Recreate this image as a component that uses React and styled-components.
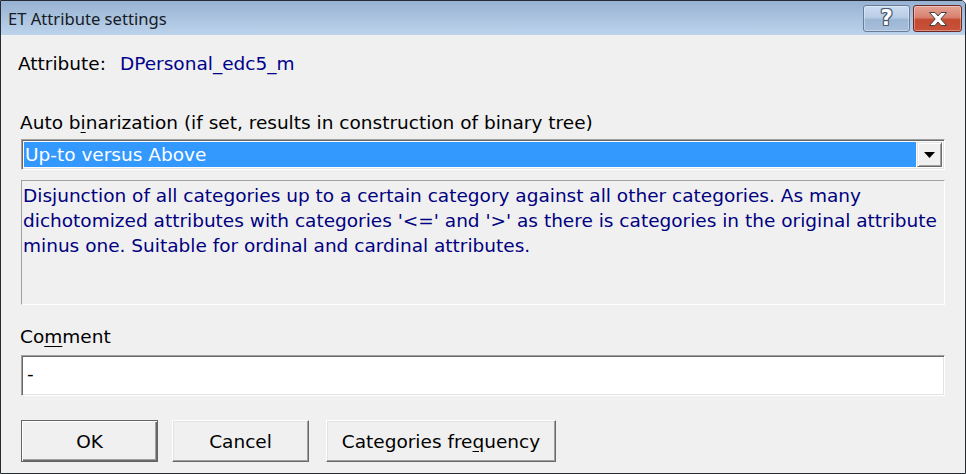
import React from "react";
import styled, { createGlobalStyle } from "styled-components";

const GlobalStyle = createGlobalStyle`
    html, body {
        margin: 0;
        padding: 0;
        background: #ffffff;
    }
    body {
        font-family: "DejaVu Sans", "Liberation Sans", sans-serif;
        font-size: 18.5px;
        color: #000;
    }
`

const Window = styled.div`
    width: 966px;
    height: 474px;
    box-sizing: border-box;
    display: flex;
    flex-direction: column;
    border: 1px solid #252a33;
    border-top-right-radius: 5px;
    box-shadow: inset 1px 0 0 #7ea5d6, inset -1px -1px 0 #23b4ea;
    overflow: hidden;
`

const TitleBar = styled.div`
    height: 34px;
    flex: none;
    display: flex;
    align-items: flex-start;
    justify-content: space-between;
    padding: 0 3px 0 7px;
    background: linear-gradient(#97b2d2, #bdd3ec);
    .caption{
        font-family: "Noto Sans", "Open Sans", sans-serif;
        font-size: 16.6px;
        color: #161b24;
        line-height: 36px;
    }
`

const CaptionButtons = styled.div`
    display: flex;
    gap: 3px;
    margin-top: 4px;
`

const CaptionButton = styled.div`
    width: ${props => props.$wide}px;
    height: 27px;
    box-sizing: border-box;
    border-radius: 3px;
    border: 1px solid ${props => props.$close ? '#6e2a22' : '#6a7d98'};
    background: ${props => props.$close
        ? 'linear-gradient(#e4a295 0%, #d9826f 45%, #c44a31 55%, #c8523a 100%)'
        : 'linear-gradient(#cadcf1 0%, #b9cde6 45%, #9cb6d4 55%, #a8c0dc 100%)'};
    box-shadow: inset 0 0 0 1px rgba(255,255,255,0.35);
    display: flex;
    align-items: center;
    justify-content: center;
    .q{
        font-family: "DejaVu Sans", sans-serif;
        font-weight: bold;
        font-size: 21px;
        line-height: 21px;
        color: #fff;
        text-shadow: 1px 0 0 #4b5a70, -1px 0 0 #4b5a70, 0 1px 0 #4b5a70, 0 -1px 0 #4b5a70,
            1px 1px 0 #4b5a70, -1px -1px 0 #4b5a70, 1px -1px 0 #4b5a70, -1px 1px 0 #4b5a70;
    }
`

const Client = styled.div`
    flex: 1;
    background: #f0f0f0;
    padding: 0 20px 0 19px;
    display: flex;
    flex-direction: column;
`

const AttrRow = styled.div`
    display: flex;
    margin-top: 17px;
    margin-left: -2px;
    line-height: 24px;
    .label{
        width: 102px;
    }
    .value{
        color: #00008b;
    }
`

const Label = styled.div`
    line-height: 24px;
    margin-top: ${props => props.$top}px;
    margin-bottom: ${props => props.$bottom}px;
    u{
        text-decoration-thickness: 1px;
        text-underline-offset: 3px;
    }
`

const Combo = styled.div`
    margin-left: 1px;
    height: 31px;
    box-sizing: border-box;
    display: flex;
    border-style: solid;
    border-width: 1px;
    border-color: #a0a0a0 #ffffff #ffffff #a0a0a0;
    box-shadow: inset 1px 1px 0 #696969, inset -1px -1px 0 #e3e3e3;
    background: #fff;
    padding: 2px;
    .selected{
        flex: 1;
        background: #3399ff;
        color: #fff;
        line-height: 26px;
        padding-left: 1px;
        margin-right: 1px;
    }
`

const DropButton = styled.div`
    width: 25px;
    box-sizing: border-box;
    background: #f0f0f0;
    border-style: solid;
    border-width: 1px;
    border-color: #e3e3e3 #696969 #696969 #e3e3e3;
    box-shadow: inset 1px 1px 0 #fff, inset -1px -1px 0 #a0a0a0;
    display: flex;
    align-items: center;
    justify-content: center;
`

const Description = styled.div`
    margin-top: 10px;
    margin-left: 1px;
    height: 125px;
    box-sizing: border-box;
    border-style: solid;
    border-width: 1px;
    border-color: #a0a0a0 #ffffff #ffffff #a0a0a0;
    color: #000080;
    line-height: 25px;
    padding: 2px 0 0 1px;
    white-space: nowrap;
`

const TextInput = styled.div`
    margin-left: 1px;
    height: 41px;
    box-sizing: border-box;
    background: #fff;
    border-style: solid;
    border-width: 1px;
    border-color: #a0a0a0 #ffffff #ffffff #a0a0a0;
    box-shadow: inset 1px 1px 0 #696969, inset -1px -1px 0 #e3e3e3;
    line-height: 35px;
    padding-left: 5px;
`

const ButtonRow = styled.div`
    display: flex;
    margin-top: 24px;
    margin-left: 1px;
    gap: 14px;
`

const Button = styled.div`
    width: ${props => props.$width}px;
    height: 42px;
    padding-top: 1px;
    box-sizing: border-box;
    background: #f0f0f0;
    display: flex;
    align-items: center;
    justify-content: center;
    border: 1px solid;
    border-color: ${props => props.$default ? '#646464' : '#ffffff #696969 #696969 #ffffff'};
    box-shadow: ${props => props.$default
        ? 'inset 1px 1px 0 #fff, inset -1px -1px 0 #696969, inset -2px -2px 0 #a0a0a0'
        : 'inset -1px -1px 0 #a0a0a0, inset 1px 1px 0 #e3e3e3'};
    margin-left: ${props => props.$extra || 0}px;
    u{
        text-underline-offset: 3px;
    }
`

const CloseIcon = () => (
    <svg width="22" height="16" viewBox="0 0 22 16">
        <path d="M2.5 1.5 H8 L11 5 L14 1.5 H19.5 L13.8 8 L19.5 14.5 H14 L11 11 L8 14.5 H2.5 L8.2 8 Z"
            fill="#ffffff" stroke="#3f3f46" strokeWidth="1" strokeLinejoin="round" />
    </svg>
)

const ArrowIcon = () => (
    <svg width="11" height="6" viewBox="0 0 11 6">
        <path d="M0 0 H11 L5.5 6 Z" fill="#000" />
    </svg>
)

const App = () => {
    return (
        <>
            <GlobalStyle />
            <Window>
                <TitleBar>
                    <span className="caption">ET Attribute settings</span>
                    <CaptionButtons>
                        <CaptionButton $wide={47}><span className="q">?</span></CaptionButton>
                        <CaptionButton $wide={49} $close><CloseIcon /></CaptionButton>
                    </CaptionButtons>
                </TitleBar>
                <Client>
                    <AttrRow>
                        <span className="label">Attribute:</span>
                        <span className="value">DPersonal_edc5_m</span>
                    </AttrRow>
                    <Label $top={35} $bottom={4}>Auto b<u>i</u>narization (if set, results in construction of binary tree)</Label>
                    <Combo>
                        <div className="selected">Up-to versus Above</div>
                        <DropButton><ArrowIcon /></DropButton>
                    </Combo>
                    <Description>
                        Disjunction of all categories up to a certain category against all other categories. As many<br />
                        dichotomized attributes with categories '&lt;=' and '&gt;' as there is categories in the original attribute<br />
                        minus one. Suitable for ordinal and cardinal attributes.
                    </Description>
                    <Label $top={20} $bottom={6}>Co<u>m</u>ment</Label>
                    <TextInput>-</TextInput>
                    <ButtonRow>
                        <Button $width={137} $default>OK</Button>
                        <Button $width={137}>Cancel</Button>
                        <Button $width={230} $extra={3}>Categories fre<u>q</u>uency</Button>
                    </ButtonRow>
                </Client>
            </Window>
        </>
    )
}

export default App
